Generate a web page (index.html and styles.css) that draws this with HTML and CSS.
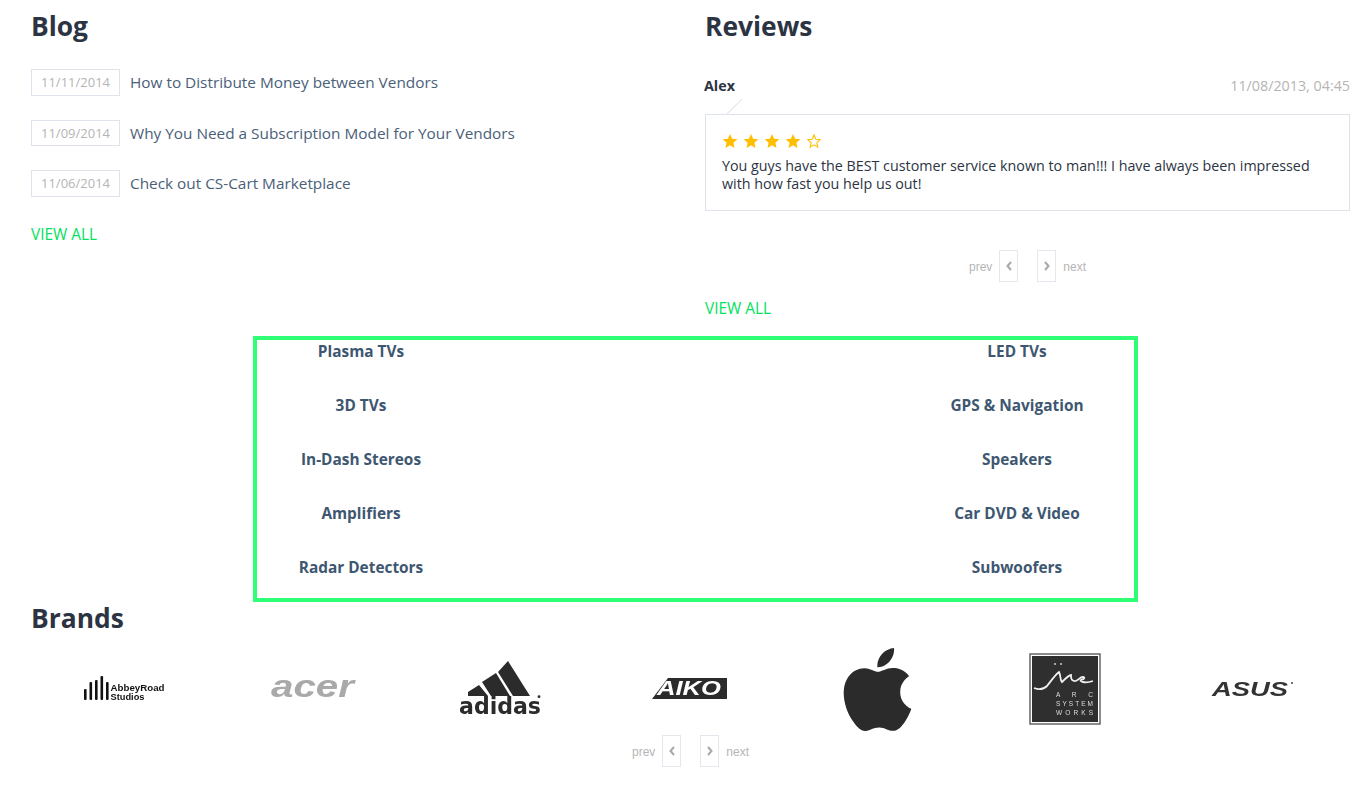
FILE: index.html
```html
<!DOCTYPE html>
<html>
<head>
  <meta charset="UTF-8">
  <title>Blog, Reviews and Brands</title>
  <link rel="stylesheet" href="styles.css">
</head>
<body>
  <div class="container">
    <div class="top-row">
      <div class="blog">
        <h2>Blog</h2>
        <div class="post"><span class="post-date">11/11/2014</span><a href="#">How to Distribute Money between Vendors</a></div>
        <div class="post"><span class="post-date">11/09/2014</span><a href="#">Why You Need a Subscription Model for Your Vendors</a></div>
        <div class="post"><span class="post-date">11/06/2014</span><a href="#">Check out CS-Cart Marketplace</a></div>
        <a href="#" class="view-all view-all-blog">VIEW ALL</a>
      </div>

      <div class="reviews">
        <h2>Reviews</h2>
        <div class="review-head">
          <span class="review-author">Alex</span>
          <span class="review-date">11/08/2013, 04:45</span>
        </div>
        <div class="review-box">
          <span class="review-tail"></span>
          <div class="stars">
            <svg viewBox="0 0 16 16" class="star"><polygon points="8,1 10.1,5.8 15.3,6.3 11.4,9.8 12.5,15 8,12.3 3.5,15 4.6,9.8 0.7,6.3 5.9,5.8"/></svg>
            <svg viewBox="0 0 16 16" class="star"><polygon points="8,1 10.1,5.8 15.3,6.3 11.4,9.8 12.5,15 8,12.3 3.5,15 4.6,9.8 0.7,6.3 5.9,5.8"/></svg>
            <svg viewBox="0 0 16 16" class="star"><polygon points="8,1 10.1,5.8 15.3,6.3 11.4,9.8 12.5,15 8,12.3 3.5,15 4.6,9.8 0.7,6.3 5.9,5.8"/></svg>
            <svg viewBox="0 0 16 16" class="star"><polygon points="8,1 10.1,5.8 15.3,6.3 11.4,9.8 12.5,15 8,12.3 3.5,15 4.6,9.8 0.7,6.3 5.9,5.8"/></svg>
            <svg viewBox="0 0 16 16" class="star star-empty"><polygon points="8,2 9.8,6.2 14.2,6.7 10.9,9.7 11.8,14.1 8,11.8 4.2,14.1 5.1,9.7 1.8,6.7 6.2,6.2"/></svg>
          </div>
          <p>You guys have the BEST customer service known to man!!! I have always been impressed with how fast you help us out!</p>
        </div>
        <div class="pager pager-reviews">
          <span>prev</span>
          <a href="#" class="pager-btn"><svg viewBox="0 0 8 12"><polyline points="6,2 2.5,6 6,10"/></svg></a>
          <a href="#" class="pager-btn pager-next"><svg viewBox="0 0 8 12"><polyline points="2,2 5.5,6 2,10"/></svg></a>
          <span>next</span>
        </div>
        <a href="#" class="view-all">VIEW ALL</a>
      </div>
    </div>

    <div class="categories">
      <a href="#">Plasma TVs</a>
      <a href="#">LED TVs</a>
      <a href="#">3D TVs</a>
      <a href="#">GPS &amp; Navigation</a>
      <a href="#">In-Dash Stereos</a>
      <a href="#">Speakers</a>
      <a href="#">Amplifiers</a>
      <a href="#">Car DVD &amp; Video</a>
      <a href="#">Radar Detectors</a>
      <a href="#">Subwoofers</a>
    </div>

    <h2>Brands</h2>
    <div class="brands">
      <div class="brand">
        <svg width="96" height="26" viewBox="0 0 96 26">
          <g fill="#111">
            <rect x="7" y="13" width="2.6" height="11" rx="1"/>
            <rect x="12.5" y="6" width="2.6" height="18" rx="1"/>
            <rect x="18" y="4" width="2.6" height="20" rx="1"/>
            <rect x="23.5" y="0" width="2.6" height="24" rx="1"/>
            <rect x="29" y="6" width="2.6" height="18" rx="1"/>
            <text x="33.5" y="15.2" class="logo-abbey" textLength="54" lengthAdjust="spacingAndGlyphs">AbbeyRoad</text>
            <text x="33.5" y="23.6" class="logo-abbey" textLength="34" lengthAdjust="spacingAndGlyphs">Studios</text>
          </g>
        </svg>
      </div>
      <div class="brand">
        <svg width="86" height="48" viewBox="0 0 86 48">
          <text x="1" y="32" class="logo-acer" textLength="83" lengthAdjust="spacingAndGlyphs">acer</text>
        </svg>
      </div>
      <div class="brand">
        <svg width="86" height="58" viewBox="0 0 86 58">
          <g fill="#2b2b2b">
            <polygon points="10,32 21,25 30,36 10,36"/>
            <polygon points="24,22 38,13 52,36 33,36"/>
            <polygon points="40,12 50,1 72,36 55,36"/>
            <text x="1" y="54" class="logo-adidas" textLength="82" lengthAdjust="spacingAndGlyphs">adidas</text>
            <circle cx="81" cy="36.7" r="1.4"/>
          </g>
        </svg>
      </div>
      <div class="brand">
        <svg width="78" height="24" viewBox="0 0 78 24">
          <polygon points="18,1 77,1 77,22 2,22" fill="#2b2b2b"/>
          <text x="7" y="18" class="logo-aiko" textLength="64" lengthAdjust="spacingAndGlyphs">AIKO</text>
        </svg>
      </div>
      <div class="brand">
        <svg width="83" height="83" viewBox="0 0 24 24">
          <path fill="#2b2b2b" d="M12.152 6.896c-.948 0-2.415-1.078-3.96-1.04-2.04.027-3.91 1.183-4.961 3.014-2.117 3.675-.546 9.103 1.519 12.09 1.013 1.454 2.208 3.09 3.792 3.039 1.52-.065 2.09-.987 3.935-.987 1.831 0 2.35.987 3.96.948 1.637-.026 2.676-1.48 3.676-2.948 1.156-1.688 1.636-3.325 1.662-3.415-.039-.013-3.182-1.221-3.22-4.857-.026-3.04 2.48-4.494 2.597-4.559-1.429-2.09-3.623-2.324-4.39-2.376-2-.156-3.675 1.09-4.61 1.09zM15.53 3.83c.843-1.012 1.4-2.427 1.245-3.83-1.207.052-2.662.805-3.532 1.818-.78.896-1.454 2.338-1.273 3.714 1.338.104 2.715-.688 3.559-1.701"/>
        </svg>
      </div>
      <div class="brand">
        <svg width="72" height="72" viewBox="0 0 72 72">
          <rect x="1" y="1" width="70" height="70" fill="#fff" stroke="#666" stroke-width="1.5"/>
          <rect x="3" y="3" width="66" height="66" fill="#2f2f2f"/>
          <circle cx="26" cy="11" r="0.9" fill="#ddd"/>
          <circle cx="32" cy="11" r="0.9" fill="#ddd"/>
          <path d="M5 35 C10 37 14 37 18 33 C22 28 26 22 30 19 C32 23 31 27 33 29 C37 25 41 22 42 22 C42 25 42 27 45 28 C49 29 50 24 54 24 C56 24 56 26 52 27 C50 28 55 31 64 28" fill="none" stroke="#eee" stroke-width="1.8"/>
          <text x="27" y="44" class="logo-arc" textLength="37">A R C</text>
          <text x="27" y="53" class="logo-arc" textLength="37">SYSTEM</text>
          <text x="27" y="62" class="logo-arc" textLength="37">WORKS</text>
        </svg>
      </div>
      <div class="brand">
        <svg width="84" height="26" viewBox="0 0 84 26">
          <text x="1" y="20" class="logo-asus" textLength="76" lengthAdjust="spacingAndGlyphs">ASUS</text>
          <circle cx="81" cy="7" r="1" fill="#444"/>
        </svg>
      </div>
    </div>
    <div class="pager pager-brands">
      <span>prev</span>
      <a href="#" class="pager-btn"><svg viewBox="0 0 8 12"><polyline points="6,2 2.5,6 6,10"/></svg></a>
      <a href="#" class="pager-btn pager-next"><svg viewBox="0 0 8 12"><polyline points="2,2 5.5,6 2,10"/></svg></a>
      <span>next</span>
    </div>
  </div>
</body>
</html>
```

FILE: styles.css
```css
body {
  margin: 0;
  font-family: "Open Sans", sans-serif;
  background: white;
  color: #2c3443;
}

a {
  text-decoration: none;
}

.container {
  width: 1319px;
  margin-left: 31px;
  padding-top: 10px;
}

h2 {
  margin: 0;
  font-size: 26.4px;
  line-height: 32px;
  font-weight: 700;
  color: #2c3443;
}

.top-row {
  display: grid;
  grid-template-columns: 644px 645px;
  column-gap: 30px;
}

/* blog */
.blog h2 {
  margin-bottom: 27px;
}

.post {
  display: flex;
  align-items: center;
  height: 26.5px;
  margin-bottom: 24px;
}

.post a {
  font-size: 15.35px;
  color: #4a6078;
}

.post-date {
  box-sizing: border-box;
  width: 89px;
  height: 100%;
  margin-right: 10px;
  border: 1px solid #dfe4ec;
  font-size: 13px;
  line-height: 25px;
  text-align: center;
  color: #b5b5b5;
}

.view-all {
  display: block;
  font-size: 15.4px;
  line-height: 22px;
  color: #00e25b;
}

.view-all-blog {
  margin-top: 27px;
}

/* reviews */
.review-head {
  display: flex;
  justify-content: space-between;
  align-items: center;
  height: 20px;
  margin-top: 33px;
  margin-bottom: 19px;
}

.review-author {
  margin-left: -1px;
  font-size: 14.3px;
  font-weight: 700;
}

.review-date {
  font-size: 14.3px;
  color: #b5b5b5;
}

.review-box {
  position: relative;
  padding: 17px 16px;
  border: 1px solid #dfe4ec;
}

.review-tail {
  position: absolute;
  top: -9px;
  left: 18px;
  width: 21px;
  height: 1px;
  background: #dfe4ec;
  transform: rotate(-45deg);
}

.review-box p {
  margin: 7px 0 0;
  font-size: 14.3px;
  line-height: 18px;
}

.stars {
  display: flex;
  gap: 5px;
  height: 18px;
  align-items: center;
}

.star {
  width: 16px;
  height: 16px;
  fill: #ffbe00;
}

.star-empty {
  fill: none;
  stroke: #ffbe00;
  stroke-width: 1.1;
}

/* prev / next */
.pager {
  display: flex;
  justify-content: center;
  align-items: center;
  height: 32px;
  font-family: "Liberation Sans", sans-serif;
  font-size: 12px;
  color: #b5b5b5;
}

.pager span {
  padding-top: 2px;
}

.pager-reviews {
  margin-top: 39px;
  margin-bottom: 16px;
}

.pager-brands {
  margin-top: 2px;
}

.pager-btn {
  box-sizing: border-box;
  display: flex;
  justify-content: center;
  width: 19px;
  height: 32px;
  margin: 0 19px 0 7px;
  padding-top: 9px;
  border: 1px solid #e3e7ee;
}

.pager-next {
  margin: 0 7px 0 0;
}

.pager-btn svg {
  width: 8px;
  height: 12px;
  fill: none;
  stroke: #a8a8a8;
  stroke-width: 2;
}

/* categories */
.categories {
  box-sizing: border-box;
  display: grid;
  grid-template-columns: 208px 208px;
  grid-auto-rows: 22px;
  align-content: start;
  column-gap: 448px;
  row-gap: 32px;
  width: 885px;
  height: 266px;
  margin: 16px 0 0 222px;
  padding-top: 1px;
  border: 4px solid #2eff74;
}

.categories a {
  font-size: 15.4px;
  line-height: 22px;
  font-weight: 700;
  text-align: center;
  color: #3e5770;
}

/* brands */
.brands {
  display: flex;
  height: 88px;
  margin-top: 11px;
}

.brand {
  display: flex;
  justify-content: center;
  align-items: center;
  width: 188px;
}

.brand svg {
  filter: blur(0.3px);
}

.logo-abbey {
  font-family: "Liberation Sans", sans-serif;
  font-size: 9.5px;
  font-weight: 700;
}

.logo-acer {
  font-family: "Liberation Sans", sans-serif;
  font-size: 32px;
  font-weight: 700;
  font-style: italic;
  fill: #a9a9a9;
}

.logo-adidas {
  font-family: "DejaVu Sans", sans-serif;
  font-size: 23px;
  font-weight: 700;
}

.logo-aiko {
  font-family: "Liberation Sans", sans-serif;
  font-size: 20px;
  font-weight: 700;
  font-style: italic;
  fill: white;
}

.logo-arc {
  font-family: "Liberation Sans", sans-serif;
  font-size: 6.5px;
  fill: #ddd;
}

.logo-asus {
  font-family: "Liberation Sans", sans-serif;
  font-size: 19.5px;
  font-weight: 700;
  font-style: italic;
  fill: #333;
}
```
